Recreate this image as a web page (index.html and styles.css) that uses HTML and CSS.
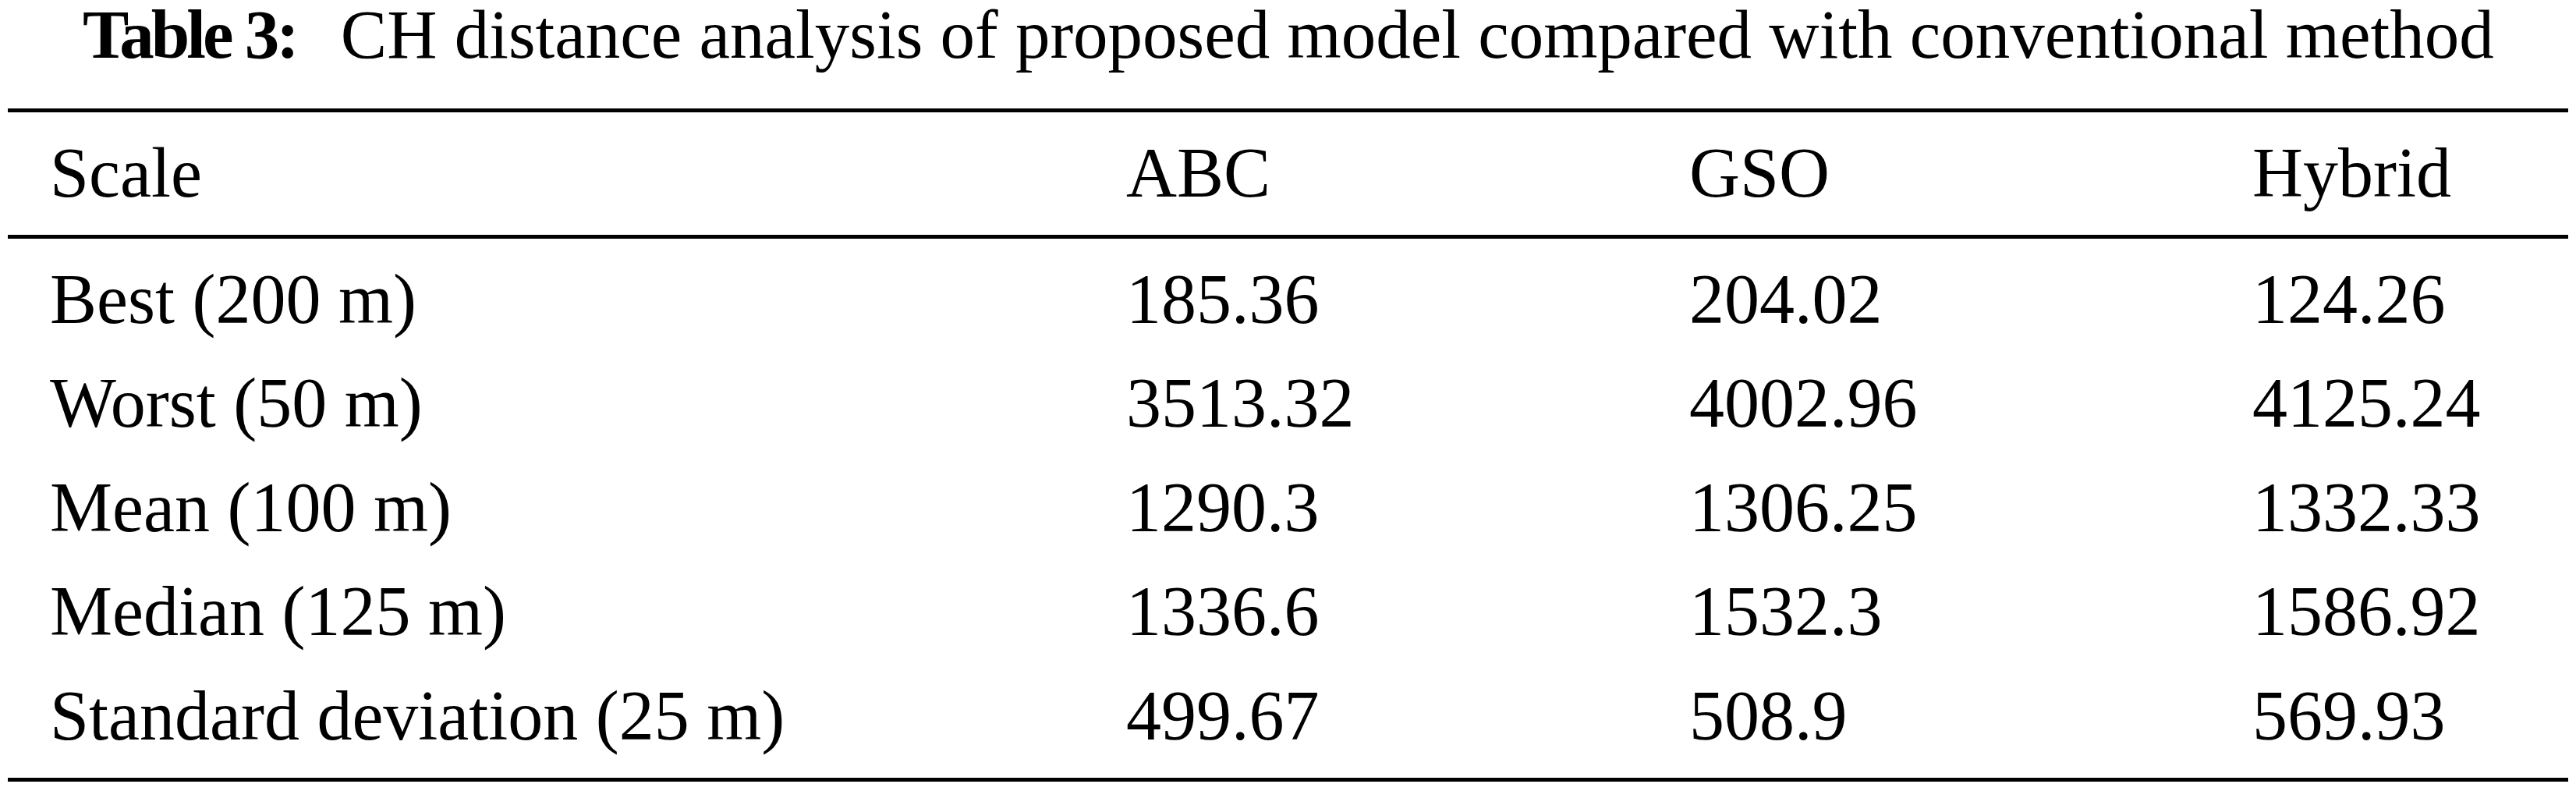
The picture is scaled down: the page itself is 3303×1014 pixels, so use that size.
FILE: index.html
```html
<!DOCTYPE html>
<html>
<head>
<title>Table 3: CH distance analysis</title>
<link rel="stylesheet" href="styles.css">
</head>
<body>

<div class="table-wrap">
  <div class="caption">
    <span class="caption-label">Table 3:</span><span class="caption-text">CH distance analysis of proposed model compared with conventional method</span>
  </div>

  <table class="results">
    <colgroup>
      <col class="col-scale">
      <col class="col-num">
      <col class="col-num">
      <col class="col-last">
    </colgroup>
    <thead>
      <tr>
        <th>Scale</th>
        <th>ABC</th>
        <th>GSO</th>
        <th>Hybrid</th>
      </tr>
    </thead>
    <tbody>
      <tr>
        <td>Best (200 m)</td>
        <td>185.36</td>
        <td>204.02</td>
        <td>124.26</td>
      </tr>
      <tr>
        <td>Worst (50 m)</td>
        <td>3513.32</td>
        <td>4002.96</td>
        <td>4125.24</td>
      </tr>
      <tr>
        <td>Mean (100 m)</td>
        <td>1290.3</td>
        <td>1306.25</td>
        <td>1332.33</td>
      </tr>
      <tr>
        <td>Median (125 m)</td>
        <td>1336.6</td>
        <td>1532.3</td>
        <td>1586.92</td>
      </tr>
      <tr>
        <td>Standard deviation (25 m)</td>
        <td>499.67</td>
        <td>508.9</td>
        <td>569.93</td>
      </tr>
    </tbody>
  </table>
</div>

</body>
</html>
```

FILE: styles.css
```css
body, html {
  margin: 0;
  background: #fff;
  color: #000;
  font-family: "Liberation Serif", "Times New Roman", serif;
}

.table-wrap {
  padding: 0 10px;
}

/* Caption above the table */
.caption {
  font-size: 89px;
  line-height: 88px;
  padding-left: 96px;
  margin-bottom: 51px;
  white-space: nowrap;
}

.caption-label {
  font-weight: bold;
  letter-spacing: -4px;
}

.caption-text {
  margin-left: 57px;
}

.results {
  width: 100%;
  border-collapse: collapse;
  table-layout: fixed;
  font-size: 90px;
  border-top: 5px solid #000;
  border-bottom: 5px solid #000;
}

.col-scale {
  width: 1434px;
}

.col-num {
  width: 722px;
}

.results th,
.results td {
  text-align: left;
  font-weight: normal;
  line-height: 133.5px;
  padding: 0;
  white-space: nowrap;
}

.results th:first-child,
.results td:first-child {
  padding-left: 54px;
}

.results thead th {
  padding-top: 11px;
  padding-bottom: 12px;
  border-bottom: 5px solid #000;
}

.results tbody tr:first-child td {
  padding-top: 11px;
}

.results tbody tr:last-child td {
  padding-bottom: 13px;
}
```
